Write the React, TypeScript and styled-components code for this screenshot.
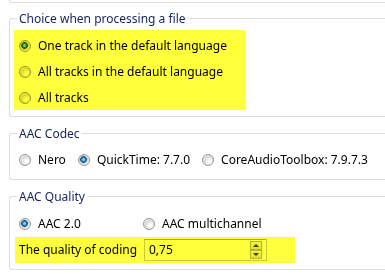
import React from 'react';
import styled, { createGlobalStyle } from 'styled-components';

const GlobalStyle = createGlobalStyle`
	html, body {
		margin: 0;
		background: #fff;
		overflow: hidden;
	}

	body {
		font-family: 'Noto Sans', 'DejaVu Sans', sans-serif;
		font-size: 12px;
		color: #000;
	}
`;

const codecs = [
	{ label: 'Nero', checked: false },
	{ label: 'QuickTime: 7.7.0', checked: true },
	{ label: 'CoreAudioToolbox: 7.9.7.3', checked: false },
];

const trackChoices = [
	{ label: 'One track in the default language', checked: true },
	{ label: 'All tracks in the default language', checked: false },
	{ label: 'All tracks', checked: false },
];

interface RadioOptionProps {
	label: string;
	checked?: boolean;
}

const RadioOption = ({ label, checked }: RadioOptionProps) => (
	<Option>
		<RadioMark $checked={checked} />
		<span>{label}</span>
	</Option>
);

const App = () => {
	return (
		<Page>
			<GlobalStyle />
			<PreviousGroupEdge />

			<GroupBox>
				<Caption>Choice when processing a file</Caption>
				<ChoiceHighlight>
					{trackChoices.map((choice) => (
						<ChoiceRow key={choice.label}>
							<RadioOption label={choice.label} checked={choice.checked} />
						</ChoiceRow>
					))}
				</ChoiceHighlight>
			</GroupBox>

			<GroupBox>
				<Caption>AAC Codec</Caption>
				<CodecRow>
					{codecs.map((codec) => (
						<RadioOption key={codec.label} label={codec.label} checked={codec.checked} />
					))}
				</CodecRow>
			</GroupBox>

			<GroupBox>
				<Caption>AAC Quality</Caption>
				<QualityRow>
					<RadioOption label="AAC 2.0" checked />
					<RadioOption label="AAC multichannel" />
				</QualityRow>
				<CodingHighlight>
					<CodingLabel>The quality of coding</CodingLabel>
					<SpinBox>
						<SpinValue>0,75</SpinValue>
						<Spinner>
							<SpinButton>
								<Arrow $up />
							</SpinButton>
							<SpinButton>
								<Arrow />
							</SpinButton>
						</Spinner>
					</SpinBox>
				</CodingHighlight>
			</GroupBox>
		</Page>
	);
};

export default App;

// the group boxes run on past the right edge of the window, so no right border shows
const Page = styled.div`
	width: 385px;
	box-sizing: border-box;
	padding-left: 9px;
`;

const PreviousGroupEdge = styled.div`
	height: 2px;
	border-left: 1px solid #d5dfe5;
	border-bottom: 1px solid #d5dfe5;
	border-bottom-left-radius: 3px;
`;

const GroupBox = styled.fieldset`
	margin: 7px 0 0;
	padding: 0 0 6px;
	border: 1px solid #d5dfe5;
	border-right: none;
	border-radius: 3px 0 0 3px;
	min-width: 0;

	& + & {
		margin-top: 8px;
	}
`;

const Caption = styled.legend`
	margin-left: 7px;
	padding: 0 2px;
	line-height: 17px;
	color: #14225a;
`;

const Highlight = styled.div`
	position: relative;

	&::after {
		content: '';
		position: absolute;
		inset: 0;
		background: #ffff3c;
		mix-blend-mode: multiply;
		pointer-events: none;
	}
`;

const ChoiceHighlight = styled(Highlight)`
	margin: 3px 0 0 4px;
	width: 231px;
	height: 80px;
	padding: 3px 0 0 5px;
	box-sizing: border-box;
`;

const ChoiceRow = styled.div`
	height: 26px;
	display: flex;
	align-items: center;
`;

const CodecRow = styled.div`
	display: flex;
	align-items: center;
	gap: 12px;
	height: 26px;
	margin-top: 5px;
	padding-left: 9px;
`;

const QualityRow = styled.div`
	display: grid;
	grid-template-columns: 124px auto;
	align-items: center;
	height: 26px;
	margin-top: 6px;
	padding-left: 9px;
`;

const Option = styled.label`
	display: flex;
	align-items: center;
	gap: 7px;
	white-space: nowrap;
	line-height: 16px;
`;

const RadioMark = styled.span<{ $checked?: boolean }>`
	width: 12px;
	height: 12px;
	box-sizing: border-box;
	border-radius: 50%;
	border: 1px solid #989898;
	flex-shrink: 0;
	background: ${({ $checked }) =>
		$checked
			? 'radial-gradient(circle at 45% 45%, #8fd6f6 0 0.8px, #2b86c4 1.8px, #13507e 3px, #c9c9c9 3.6px, #ededed 5px, #fafafa 6px)'
			: 'radial-gradient(circle at 65% 65%, #ffffff 0 1px, #efefef 3px, #d6d6d6 5px, #e8e8e8 6px)'};
`;

const CodingHighlight = styled(Highlight)`
	display: flex;
	align-items: center;
	width: 280px;
	height: 26px;
	margin-left: 5px;
	padding-left: 4px;
	box-sizing: border-box;
`;

const CodingLabel = styled.span`
	width: 125px;
	flex-shrink: 0;
	line-height: 16px;
`;

const SpinBox = styled.div`
	display: flex;
	align-items: flex-start;
	width: 123px;
	height: 22px;
	box-sizing: border-box;
	border: 1px solid #c6cbd2;
	border-top-color: #abadb3;
	background: #fff;
`;

const SpinValue = styled.span`
	flex: 1;
	padding-left: 4px;
	line-height: 20px;
`;

const Spinner = styled.div`
	display: flex;
	flex-direction: column;
	margin: 1px 4px 0 0;
`;

const SpinButton = styled.div`
	width: 12px;
	height: 9px;
	box-sizing: border-box;
	border: 1px solid #b4b8bd;
	background: linear-gradient(#f6f6f6, #dedede);
	display: flex;
	align-items: center;
	justify-content: center;
`;

const Arrow = styled.span<{ $up?: boolean }>`
	width: 0;
	height: 0;
	border-left: 3px solid transparent;
	border-right: 3px solid transparent;
	${({ $up }) => ($up ? 'border-bottom: 3px solid #3c3c3c;' : 'border-top: 3px solid #3c3c3c;')}
`;
